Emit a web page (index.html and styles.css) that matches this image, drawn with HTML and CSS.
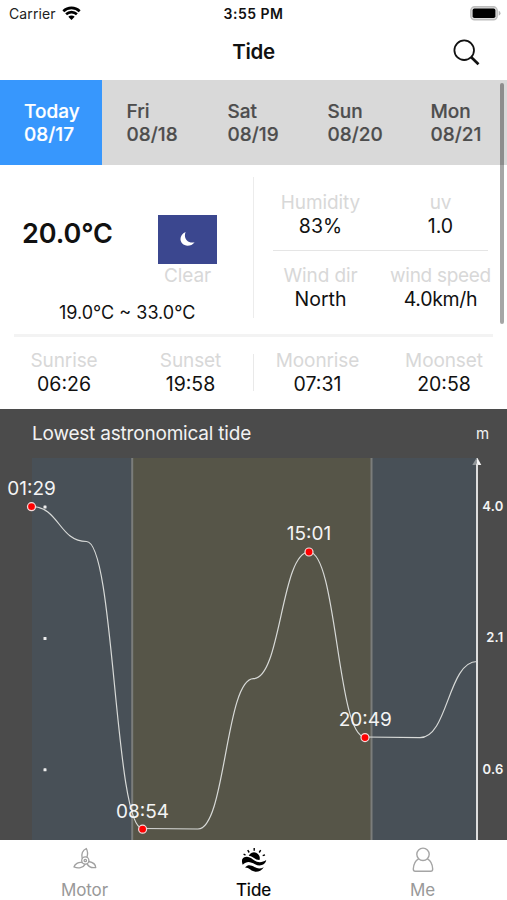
FILE: index.html
```html
<!DOCTYPE html>
<html lang="en">
<head>
<meta charset="utf-8">
<title>Tide</title>
<link rel="stylesheet" href="styles.css">
</head>
<body>
<div class="app">
  <header class="status">
    <div class="carrier"><span>Carrier</span>
      <svg width="19" height="15" viewBox="0 0 19 15"><path d="M1.3 5.2a11.8 11.8 0 0 1 16.4 0M4.1 8.3a7.8 7.8 0 0 1 10.8 0" fill="none" stroke="#000" stroke-width="2.6"/><path d="M9.5 14 6.3 10.7a4.6 4.6 0 0 1 6.4 0z"/></svg>
    </div>
    <span class="clock">3:55 PM</span>
    <svg class="battery" width="31" height="15" viewBox="0 0 31 15"><rect x=".8" y=".8" width="26.4" height="13" rx="3.8" fill="#ddd" stroke="#bdbdbd" stroke-width="1.4"/><rect x="2.6" y="2.6" width="22.8" height="9.5" rx="1.8"/><path d="M28.7 4.8q1.8.8 1.8 2.5t-1.8 2.5z" fill="#b5b5b5"/></svg>
  </header>
  <div class="nav">
    <h1>Tide</h1>
    <svg class="search" width="28" height="28" viewBox="0 0 28 28" fill="none" stroke="#111"><circle cx="11.2" cy="11.2" r="9.8" stroke-width="1.8"/><path d="m18.3 18.3 7.2 6.9" stroke-width="2.7"/></svg>
  </div>
  <div class="scroller">
    <nav class="days">
      <div class="day active"><span>Today</span><span>08/17</span></div>
      <div class="day"><span>Fri</span><span>08/18</span></div>
      <div class="day"><span>Sat</span><span>08/19</span></div>
      <div class="day"><span>Sun</span><span>08/20</span></div>
      <div class="day"><span>Mon</span><span>08/21</span></div>
    </nav>
    <section class="weather">
      <div class="now">
        <div class="now-top">
          <strong class="temp">20.0°C</strong>
          <div class="sky">
            <div class="sky-icon"><svg width="17" height="16" viewBox="0 0 17 16"><path d="M6.6 1C1.4 3.2-.1 9 3.3 12.6c3.2 3.4 9.4 2.6 12.3-1.4C9.1 12.8 4 7.500 6.600 1z" fill="#fff"/></svg></div>
            <span class="label">Clear</span>
          </div>
        </div>
        <div class="range">19.0°C ~ 33.0°C</div>
      </div>
      <div class="details">
        <div class="pair">
          <div class="stat"><span class="label">Humidity</span><span class="value">83%</span></div>
          <div class="stat"><span class="label">uv</span><span class="value">1.0</span></div>
        </div>
        <div class="pair wind">
          <div class="stat"><span class="label">Wind dir</span><span class="value">North</span></div>
          <div class="stat"><span class="label tight">wind speed</span><span class="value tight">4.0km/h</span></div>
        </div>
      </div>
    </section>
    <section class="astro">
      <div class="stat"><span class="label">Sunrise</span><span class="value">06:26</span></div>
      <div class="stat"><span class="label">Sunset</span><span class="value">19:58</span></div>
      <div class="rule"></div>
      <div class="stat"><span class="label">Moonrise</span><span class="value">07:31</span></div>
      <div class="stat"><span class="label">Moonset</span><span class="value">20:58</span></div>
    </section>
    <div class="thumb"></div>
  </div>
  <section class="tide">
    <div class="tide-head"><span>Lowest astronomical tide</span><span class="unit">m</span></div>
    <svg class="chart" width="507" height="382" viewBox="0 458 507 382">
      <rect x="32" y="458" width="445" height="382" fill="#485057"/>
      <rect x="132" y="458" width="240" height="382" fill="#565548"/>
      <path d="M132.200 458V840M371.500 458V840" stroke="#7b7d7b" stroke-width="2"/>
      <g fill="#eee"><rect x="43.500" y="505.500" width="3" height="3" rx=".6"/><rect x="43.500" y="637" width="3" height="3" rx=".6"/><rect x="43.500" y="768.300" width="3" height="3" rx=".6"/></g>
      <path d="M31.500 506.500C59 506.500 59 541.500 86.500 541.500C114.500 541.500 114.500 828.500 142.500 828.500L198 829C225.500 829 225.500 678.700 253.500 678.700C281 678.700 281 552 309 552C337 552 337 737 365 737L420 737.700C448 737.700 448 661.500 477 661.500" class="curve"/>
      <path d="M477 460V840" stroke="#dedede" stroke-width="2"/>
      <path d="M476.500 458h1l3.800 7h-3l-1.300-2z" fill="#f4f4f4"/>
      <path d="m472.300 465 4.200-7 .5 5-1.500 2z" fill="#92979a"/>
      <g class="dots"><circle cx="31.500" cy="506.700" r="4"/><circle cx="142.600" cy="829.200" r="4"/><circle cx="309" cy="552" r="4"/><circle cx="365" cy="737.600" r="4"/></g>
      <g class="times"><text x="31.500" y="495">01:29</text><text x="142.600" y="817.500">08:54</text><text x="309" y="540.200">15:01</text><text x="365.200" y="725.700">20:49</text></g>
      <g class="scale"><text x="503.500" y="511.300">4.0</text><text x="503.500" y="642">2.1</text><text x="503.500" y="774">0.6</text></g>
    </svg>
  </section>
  <footer class="tabs">
    <div class="tab">
      <svg width="28" height="26" viewBox="0 0 28 26" fill="none" stroke="#a0a0a0" stroke-width="1.300"><circle cx="14.300" cy="13.500" r="3.600"/><circle cx="14.300" cy="13.500" r="1.200"/><path d="M11.200 11.600C9.900 7.500 11.600 3 15.300 1.600c1.700 3 1.500 5.900.6 8.600M11.300 15.500c-3.900-.7-7.600 1.500-8.300 4.400 4.200 1.700 9.200 1 11.300-2.800M17.700 14.500c3.500.6 6.900 2.600 7 6-3.800.6-7.200-.7-8.700-3.900"/></svg>
      <span>Motor</span>
    </div>
    <div class="tab on">
      <svg width="28" height="26" viewBox="0 0 28 26"><path d="M8.700 8.800a5.800 5.800 0 0 1 10.800 4.200c-4.200.2-6-3.600-10.800-4.200z"/><path d="M2.200 12.200C5 8.600 9 9.400 13 12.600c4.500 3.500 9 3.200 13.200.5-.5 4.500-6 7-11.200 4.200-4.800-2.600-8-3.600-12.300.5-.8-1.800-.9-3.700-.5-5.600z"/><path d="M5 20.500c3.200-3.300 6-2.300 9.500-.4 3.300 1.800 6 1.700 9.300.1-3.400 5.200-9.500 5.700-13.500 2.400-1.700-1.400-3.200-2.200-5.300-2.100z"/><path d="m7.700 3.200 1.500 2.300M14.200 1v2.800M20.700 3.200l-1.500 2.300M22.700 8.700l2.300-.8M5.500 8.200 3.600 7" stroke="#000" stroke-width="1.400"/></svg>
      <span>Tide</span>
    </div>
    <div class="tab">
      <svg width="28" height="26" viewBox="0 0 28 26" fill="none" stroke="#a5a5a5" stroke-width="1.400"><circle cx="14" cy="7.300" r="6.200"/><path d="M9.600 11.800C6.500 13.500 4.500 17.500 4.300 22q0 2.200 1.900 2.200h15.600q1.900 0 1.900-2.200c-.2-4.500-2.200-8.500-5.300-10.200"/></svg>
      <span>Me</span>
    </div>
  </footer>
</div>
</body>
</html>
```

FILE: styles.css
```css
* { box-sizing: border-box; }
body { margin: 0; background: #fff; font-family: Inter, "Liberation Sans", sans-serif; color: #111; }
svg { display: block; flex: none; }
.app { width: 507px; height: 900px; overflow: hidden; display: flex; flex-direction: column; }

.status { height: 28px; display: grid; grid-template-columns: 1fr auto 1fr; align-items: center; padding: 0 6px 1px 9px; }
.carrier { display: flex; align-items: center; gap: 6px; font-size: 14px; letter-spacing: .1px; color: #222; }
.clock { font-size: 14px; font-weight: 600; letter-spacing: .5px; margin-right: 3px; }
.battery { justify-self: end; }

.nav { height: 52px; display: grid; grid-template-columns: 1fr auto 1fr; align-items: center; padding: 0 26px; }
.nav h1 { grid-column: 2; margin: 0; font-size: 20.500px; letter-spacing: -.3px; font-weight: 600; line-height: 26px; padding-bottom: 4px; }
.search { justify-self: end; margin-top: -2px; }

.scroller { position: relative; height: 329px; }
.thumb { position: absolute; right: 3px; top: 3px; width: 4px; height: 241px; border-radius: 2px; background: rgba(0, 0, 0, .35); }
.days { height: 84.500px; display: grid; grid-template-columns: 102px 101px 100px 103px 101px; background: #d9d9d9; color: #4d4d4d; }
.day { display: flex; flex-direction: column; justify-content: center; padding: 1px 0 0 24.500px; font-size: 19px; font-weight: 500; line-height: 23px; -webkit-text-stroke: .2px currentColor; }
.day.active { background: #3797fd; color: #fff; padding-left: 24px; }

.label { color: #d8d8d8; font-size: 19px; line-height: 24px; letter-spacing: -.1px; }
.value { color: #111; font-size: 19.500px; line-height: 23px; }
.tight { letter-spacing: -.3px; }
.stat { display: flex; flex-direction: column; align-items: center; white-space: nowrap; }

.weather { height: 172px; margin: 0 14px; display: grid; grid-template-columns: 240px minmax(0, 1fr); border-bottom: 3px solid #f3f3f3; }
.now { margin-top: 12px; border-right: 1px solid #ececec; height: 141px; }
.now-top { display: flex; padding: 38px 36px 0 8px; justify-content: space-between; }
.temp { font-size: 27px; line-height: 37px; font-weight: 600; letter-spacing: -.1px; }
.sky { display: flex; flex-direction: column; align-items: center; }
.sky-icon { width: 59px; height: 49px; background: #3b478f; display: flex; align-items: center; justify-content: center; }
.range { font-size: 18px; line-height: 24px; padding: 13px 0 0 45px; white-space: nowrap; }
.details { padding: 26px 5px 0 19px; }
.pair { display: grid; grid-template-columns: 95px 145px; height: 60px; border-bottom: 1px solid #e5e5e5; }
.pair.wind { border: 0; padding-top: 13px; }

.astro { height: 72.500px; padding: 12px 0 0; display: grid; grid-template-columns: 128px 125px 1px 127px 126px; }
.rule { height: 37px; margin-top: 5px; background: #e9e9e9; }

.tide { height: 431px; background: #4b4b4b; color: #f2f2f2; }
.tide-head { height: 49px; display: flex; align-items: center; justify-content: space-between; padding: 0 18px 0 32px; font-size: 19px; letter-spacing: -.2px; }
.unit { font-size: 15px; }
.curve { fill: none; stroke: #d8dad8; stroke-width: 1.200; }
.dots { fill: #f00; stroke: #f2dddd; stroke-width: 1.200; }
.times { fill: #f4f4f4; font-size: 19px; text-anchor: middle; }
.scale { fill: #f4f4f4; font-size: 13px; font-weight: 600; text-anchor: end; letter-spacing: .2px; }

.tabs { height: 60px; display: grid; grid-template-columns: repeat(3, 1fr); }
.tab { display: flex; flex-direction: column; align-items: center; padding-top: 7px; gap: 5px; font-size: 17px; line-height: 24px; color: #999; letter-spacing: -.1px; }
.tab.on { color: #000; -webkit-text-stroke: .2px #000; }
```
